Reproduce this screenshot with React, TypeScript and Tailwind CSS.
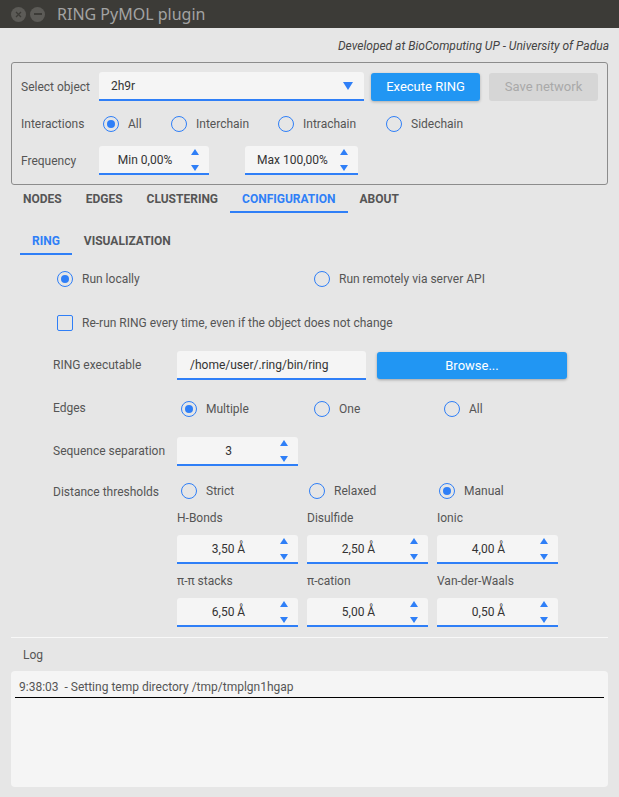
import React from "react";

function Radio({ checked = false, label, className = "" }: { checked?: boolean; label: string; className?: string }) {
  return (
    <div className={`flex items-center gap-[9px] ${className}`}>
      <span className="w-4 h-4 shrink-0 rounded-full border-[1.5px] border-[#2f7ff7] flex items-center justify-center">
        {checked && <span className="w-[8px] h-[8px] rounded-full bg-[#2f7ff7]" />}
      </span>
      <span className="text-[12px] text-[#555]">{label}</span>
    </div>
  );
}

function Arrows() {
  return (
    <div className="flex flex-col justify-between items-center pr-[10px] pt-[3px] pb-[2px]">
      <svg width="8" height="6" viewBox="0 0 8 6">
        <path d="M4 0 L8 6 L0 6 Z" fill="#2f7ff7" />
      </svg>
      <svg width="8" height="6" viewBox="0 0 8 6">
        <path d="M0 0 L8 0 L4 6 Z" fill="#2f7ff7" />
      </svg>
    </div>
  );
}

function Spin({ value, className = "" }: { value: string; className?: string }) {
  return (
    <div className={`flex h-[29px] bg-[#f5f5f5] rounded-t-[3px] border-b-2 border-[#2f7ff7] ${className}`}>
      <div className="flex-1 flex items-center justify-center text-[12px] text-[#333]">{value}</div>
      <Arrows />
    </div>
  );
}

function Tab({ label, active = false }: { label: string; active?: boolean }) {
  return (
    <div
      className={`h-[27px] px-[12px] flex items-center text-[12px] font-bold ${
        active ? "text-[#2f7ff7] border-b-2 border-[#2f7ff7]" : "text-[#555] border-b-2 border-transparent"
      }`}
    >
      {label}
    </div>
  );
}

export default function App() {
  return (
    <div className="w-[619px] h-[797px] bg-[#e6e6e6] flex flex-col overflow-hidden font-['Roboto',sans-serif]">
      {/* window title bar */}
      <div className="h-[28px] bg-[#3c3b37] flex items-center shrink-0">
        <div className="ml-[11px] w-[15px] h-[15px] rounded-full bg-[#5c5b57] flex items-center justify-center">
          <svg width="7" height="7" viewBox="0 0 7 7">
            <path d="M1 1 L6 6 M6 1 L1 6" stroke="#3c3b37" strokeWidth="1.3" />
          </svg>
        </div>
        <div className="ml-[4px] w-[15px] h-[15px] rounded-full bg-[#5c5b57] flex items-center justify-center">
          <div className="w-[8px] h-[1.5px] bg-[#3c3b37]" />
        </div>
        <span className="ml-[12px] text-[16px] text-[#a3a3a3] font-['Noto_Sans',sans-serif]">RING PyMOL plugin</span>
      </div>

      <div className="h-[34px] flex items-center justify-end pr-[10px] pt-[2px] italic text-[12px] text-[#444]">
        Developed at BioComputing UP - University of Padua
      </div>

      {/* top group box */}
      <div className="mx-[11px] h-[123px] border border-[#8c8c8c] rounded-[3px] pt-[9px] text-[12px] text-[#555]">
        <div className="flex items-center h-[29px] pl-[9px]">
          <span className="w-[78px]">Select object</span>
          <div className="w-[265px] h-[29px] bg-[#f5f5f5] rounded-t-[3px] border-b-2 border-[#2f7ff7] flex items-center justify-between pl-[12px] pr-[11px]">
            <span className="text-[#333]">2h9r</span>
            <svg width="10" height="8" viewBox="0 0 10 8">
              <path d="M0 0 L10 0 L5 8 Z" fill="#2f7ff7" />
            </svg>
          </div>
          <button className="ml-[7px] w-[109px] h-[28px] rounded-[3px] bg-[#2196f3] text-white text-[13px] shadow-[0_1px_3px_rgba(0,0,0,0.25)]">
            Execute RING
          </button>
          <button className="ml-[9px] w-[109px] h-[28px] rounded-[3px] bg-[#d6d6d6] text-[#a9a9a9] text-[13px]">Save network</button>
        </div>
        <div className="flex items-center h-[28px] mt-[9px] pl-[9px]">
          <span className="w-[82px]">Interactions</span>
          <Radio checked label="All" className="w-[68px]" />
          <Radio label="Interchain" className="w-[107px]" />
          <Radio label="Intrachain" className="w-[108px]" />
          <Radio label="Sidechain" />
        </div>
        <div className="flex items-center h-[29px] mt-[8px] pl-[9px]">
          <span className="w-[78px]">Frequency</span>
          <Spin value="Min 0,00%" className="w-[110px]" />
          <Spin value="Max 100,00%" className="w-[113px] ml-[36px]" />
        </div>
      </div>

      {/* main tabs */}
      <div className="flex pl-[11px] pt-[1px]">
        <Tab label="NODES" />
        <Tab label="EDGES" />
        <Tab label="CLUSTERING" />
        <Tab label="CONFIGURATION" active />
        <Tab label="ABOUT" />
      </div>

      {/* sub tabs */}
      <div className="flex pl-[20px] mt-[15px]">
        <Tab label="RING" active />
        <Tab label="VISUALIZATION" />
      </div>

      <div className="flex items-center h-[20px] mt-[14px] pl-[57px]">
        <Radio checked label="Run locally" className="w-[257px]" />
        <Radio label="Run remotely via server API" />
      </div>

      <div className="flex items-center h-[20px] mt-[24px] pl-[57px] gap-[9px]">
        <span className="w-4 h-4 rounded-[2px] border-[1.5px] border-[#2f7ff7]" />
        <span className="text-[12px] text-[#555]">Re-run RING every time, even if the object does not change</span>
      </div>

      <div className="flex items-center h-[29px] mt-[18px] pl-[53px] text-[12px] text-[#555]">
        <span className="w-[124px] -mt-[2px]">RING executable</span>
        <div className="w-[189px] h-[29px] bg-[#f5f5f5] rounded-t-[3px] border-b-2 border-[#2f7ff7] flex items-center pl-[13px] text-[#333]">
          /home/user/.ring/bin/ring
        </div>
        <button className="ml-[11px] w-[190px] h-[27px] rounded-[3px] bg-[#2196f3] text-white text-[13px] shadow-[0_1px_3px_rgba(0,0,0,0.3)]">
          Browse...
        </button>
      </div>

      <div className="flex items-center h-[20px] mt-[19px] pl-[53px] text-[12px] text-[#555]">
        <span className="w-[128px] -mt-[3px]">Edges</span>
        <Radio checked label="Multiple" className="w-[133px]" />
        <Radio label="One" className="w-[130px]" />
        <Radio label="All" />
      </div>

      <div className="flex items-center h-[29px] mt-[18px] pl-[53px] text-[12px] text-[#555]">
        <span className="w-[124px] -mt-[2px]">Sequence separation</span>
        <Spin value="3" className="w-[121px]" />
      </div>

      <div className="flex items-center h-[20px] mt-[15px] pl-[53px] text-[12px] text-[#555]">
        <span className="w-[128px] mt-[2px]">Distance thresholds</span>
        <Radio label="Strict" className="w-[128px]" />
        <Radio label="Relaxed" className="w-[130px]" />
        <Radio checked label="Manual" />
      </div>

      <div className="pl-[177px] mt-[9px] grid grid-cols-[121px_121px_121px] gap-x-[9px] text-[12px] text-[#555]">
        <span className="h-[16px] flex items-center">H-Bonds</span>
        <span className="h-[16px] flex items-center">Disulfide</span>
        <span className="h-[16px] flex items-center">Ionic</span>
        <Spin value="3,50 Å" className="mt-[9px]" />
        <Spin value="2,50 Å" className="mt-[9px]" />
        <Spin value="4,00 Å" className="mt-[9px]" />
        <span className="h-[16px] flex items-center mt-[9px]">π-π stacks</span>
        <span className="h-[16px] flex items-center mt-[9px]">π-cation</span>
        <span className="h-[16px] flex items-center mt-[9px]">Van-der-Waals</span>
        <Spin value="6,50 Å" className="mt-[9px]" />
        <Spin value="5,00 Å" className="mt-[9px]" />
        <Spin value="0,50 Å" className="mt-[9px]" />
      </div>

      <div className="mx-[11px] mt-[10px] h-px bg-[#f8f8f8]" />

      <div className="h-[16px] mt-[9px] pl-[23px] flex items-center text-[12px] text-[#555]">Log</div>

      <div className="mx-[11px] mt-[8px] h-[116px] bg-[#f5f5f5] rounded-[4px]">
        <div className="mx-[4px] pt-[6px] pl-[4px] leading-[20px] border-b-[1.5px] border-black text-[12px] text-[#555]">
          9:38:03&nbsp; - Setting temp directory /tmp/tmplgn1hgap
        </div>
      </div>
    </div>
  );
}
